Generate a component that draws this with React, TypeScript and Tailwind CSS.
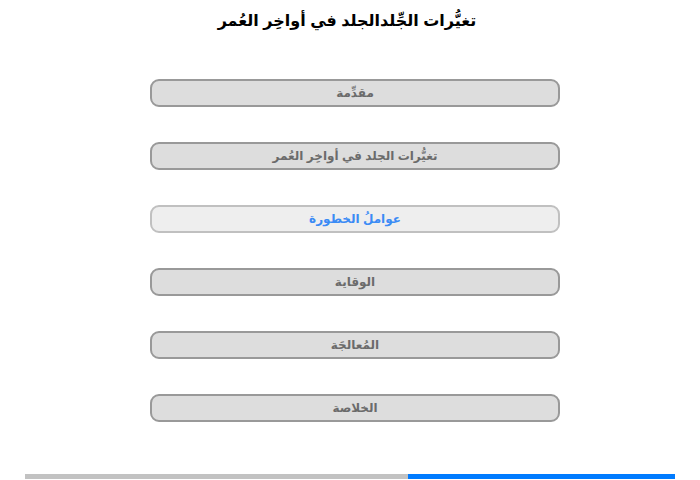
import React from "react";

const items = [
  { label: "مقدِّمة", active: false },
  { label: "تغيُّرات الجلد في أواخِر العُمر", active: false },
  { label: "عواملُ الخطورة", active: true },
  { label: "الوقاية", active: false },
  { label: "المُعالجَة", active: false },
  { label: "الخلاصة", active: false },
];

export default function App() {
  return (
    <div
      dir="rtl"
      className="w-[700px] h-[480px] bg-white flex flex-col items-center"
      style={{ fontFamily: '"Liberation Sans", "DejaVu Sans", Arial, sans-serif' }}
    >
      <h1 className="mt-[8px] mr-[6px] h-[26px] text-[16px] leading-[26px] font-bold text-black">
        تغيُّرات الجِّلدالجلد في أواخِر العُمر
      </h1>
      <div className="mt-[45px] ml-[10px] flex flex-col gap-[35px]">
        {items.map((it) => (
          <div
            key={it.label}
            className={
              it.active
                ? "w-[410px] h-[28px] rounded-[9px] border-2 border-[#c0c0c0] bg-[#eeeeee] flex items-center justify-center text-[12px] font-bold text-[#3b8bf5]"
                : "w-[410px] h-[28px] rounded-[9px] border-2 border-[#999999] bg-[#dddddd] flex items-center justify-center text-[12px] font-bold text-[#6b6b6b]"
            }
          >
            {it.label}
          </div>
        ))}
      </div>
      <div className="mt-[52px] w-[650px] h-[5px] bg-[#c2c2c2] flex">
        <div className="w-[267px] h-full bg-[#007bff]" />
      </div>
    </div>
  );
}
